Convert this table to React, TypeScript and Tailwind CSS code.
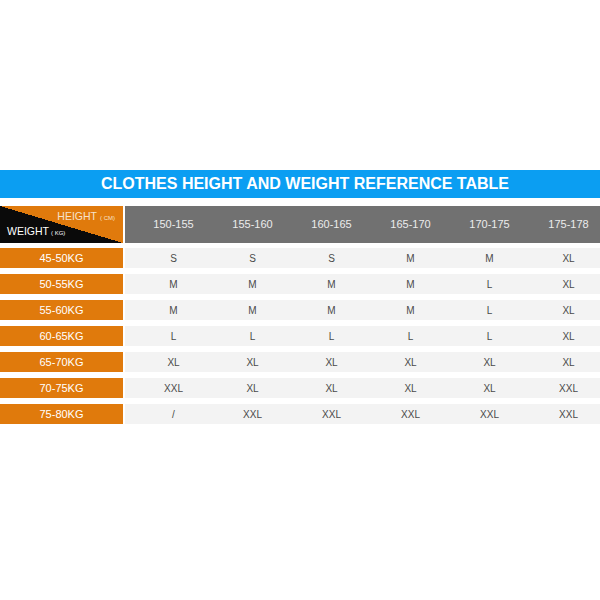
const heights = ['150-155', '155-160', '160-165', '165-170', '170-175', '175-178']

const rows: { label: string; sizes: string[] }[] = [
  { label: '45-50KG', sizes: ['S', 'S', 'S', 'M', 'M', 'XL'] },
  { label: '50-55KG', sizes: ['M', 'M', 'M', 'M', 'L', 'XL'] },
  { label: '55-60KG', sizes: ['M', 'M', 'M', 'M', 'L', 'XL'] },
  { label: '60-65KG', sizes: ['L', 'L', 'L', 'L', 'L', 'XL'] },
  { label: '65-70KG', sizes: ['XL', 'XL', 'XL', 'XL', 'XL', 'XL'] },
  { label: '70-75KG', sizes: ['XXL', 'XL', 'XL', 'XL', 'XL', 'XXL'] },
  { label: '75-80KG', sizes: ['/', 'XXL', 'XXL', 'XXL', 'XXL', 'XXL'] },
]

export default function App() {
  return (
    <div className="w-[600px] h-[600px] bg-white overflow-hidden pt-[170px] font-['Liberation_Sans',Arial,sans-serif]">
      {/* Title banner */}
      <div className="h-[28px] bg-[#0b9ef2] flex items-center justify-center">
        <span className="text-white text-[16px] font-semibold pl-[10px]">
          CLOTHES HEIGHT AND WEIGHT REFERENCE TABLE
        </span>
      </div>

      {/* Header row */}
      <div className="mt-[8px] h-[37px] flex gap-[2px]">
        <div className="w-[123px] shrink-0 relative bg-[linear-gradient(to_top_right,#0a0a0a_50%,#e07a0c_50%)]">
          <div className="absolute right-[8px] top-[5px] text-[#f6e2cc] text-[10.5px] leading-none">
            HEIGHT<span className="text-[6px] ml-[3px]">( CM)</span>
          </div>
          <div className="absolute left-[7px] top-[20px] text-white text-[10.5px] leading-none">
            WEIGHT<span className="text-[6px] ml-[2px]">( KG)</span>
          </div>
        </div>
        <div className="flex-1 bg-[#717171] overflow-hidden pl-[9px]">
          <div className="grid grid-cols-[repeat(6,79px)] h-full items-center">
            {heights.map((h) => (
              <div key={h} className="text-center text-[#ececec] text-[11px]">
                {h}
              </div>
            ))}
          </div>
        </div>
      </div>

      {/* Body rows */}
      <div className="mt-[5px] flex flex-col gap-[6px]">
        {rows.map((r) => (
          <div key={r.label} className="h-[20px] flex gap-[2px]">
            <div className="w-[123px] shrink-0 bg-[#e07a0c] text-white text-[11px] flex items-center justify-center">
              {r.label}
            </div>
            <div className="flex-1 bg-[#f3f3f3] overflow-hidden pl-[9px]">
              <div className="grid grid-cols-[repeat(6,79px)] h-full items-center">
                {r.sizes.map((s, i) => (
                  <div key={i} className="text-center text-[#4a4a4a] text-[10px]">
                    {s}
                  </div>
                ))}
              </div>
            </div>
          </div>
        ))}
      </div>
    </div>
  )
}
